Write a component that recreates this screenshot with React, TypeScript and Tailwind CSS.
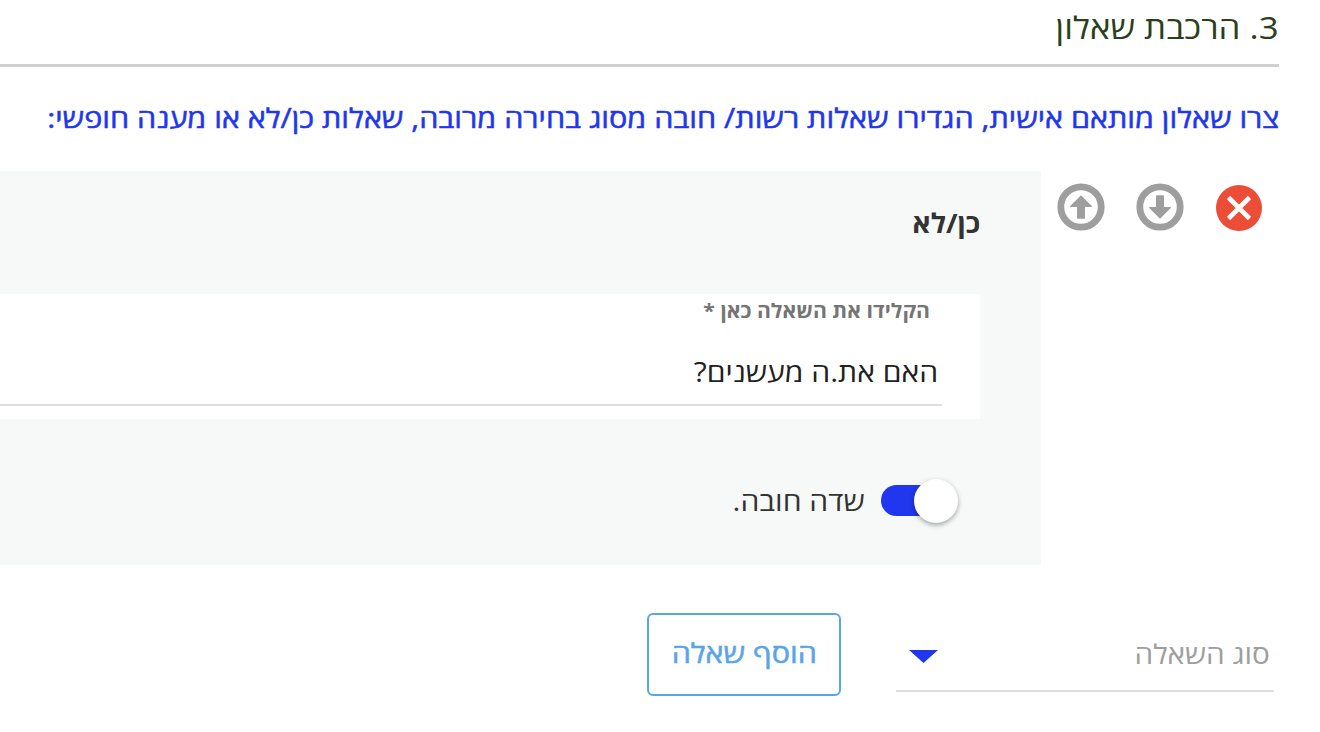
import React, { useState } from "react";

function ArrowIcon({ down = false }: { down?: boolean }) {
  return (
    <svg viewBox="0 0 48 48" className={`h-12 w-12 ${down ? "rotate-180" : ""}`}>
      <circle cx="24" cy="24" r="20.2" fill="none" stroke="#9e9e9e" strokeWidth="6.8" />
      <path
        d="M24 12.2 34.8 23Q35.4 24 34.4 24H28V34.8Q28 35.8 27 35.8H21Q20 35.8 20 34.8V24H13.6Q12.6 24 13.2 23Z"
        fill="#9e9e9e"
      />
    </svg>
  );
}

function RemoveIcon() {
  return (
    <svg viewBox="0 0 46 46" className="h-[46px] w-[46px]">
      <circle cx="23" cy="23" r="23" fill="#eb4d37" />
      <path d="M12.5 12.5 33.5 33.5M33.5 12.5 12.5 33.5" stroke="#fff" strokeWidth="4.6" />
    </svg>
  );
}

function QuestionActions() {
  return (
    <div className="flex w-[279px] shrink-0 items-start pr-[58px]">
      <button className="mt-[14px]">
        <RemoveIcon />
      </button>
      <button className="mt-3 mr-8">
        <ArrowIcon down />
      </button>
      <button className="mt-3 mr-[31px]">
        <ArrowIcon />
      </button>
    </div>
  );
}

function QuestionCard() {
  const [required, setRequired] = useState(true);
  return (
    <div className="h-[394px] flex-1 bg-[#f7f9f8] pr-[61px]">
      <h3 className="flex h-[123px] items-center pb-[19px] text-[27px] font-bold text-[#333]">
        <span className="inline-block origin-right scale-x-[1.037]">כן/לא</span>
      </h3>
      <div className="h-[125px] bg-white pr-[38px]">
        <div className="h-[112px] border-b-2 border-[#dedede]">
          <p className="pt-0.5 pr-3 text-[19.5px] leading-[30px] font-bold text-[#757575]">
            <span className="inline-block origin-right scale-x-[1.09]">הקלידו את השאלה כאן *</span>
          </p>
          <p className="mt-[26px] pr-1 text-[27px] leading-10 text-[#212121]">
            <span className="inline-block origin-right scale-x-[1.115]">האם את.ה מעשנים?</span>
          </p>
        </div>
      </div>
      <div className="mt-[60px] flex h-11 items-center pr-[22px]">
        <button
          onClick={() => setRequired(!required)}
          className="flex h-11 w-[77px] items-start"
        >
          <span className="z-10 h-11 w-11 shrink-0 rounded-full bg-white shadow-[0_2px_5px_rgba(0,0,0,0.35)]" />
          <span className="mt-1.5 -mr-7 h-[31px] w-[61px] shrink-0 rounded-full bg-[#2036ef]" />
        </button>
        <span className="mr-4 inline-block origin-right scale-x-[1.113] pb-px text-[27px] leading-10 text-[#333]">
          שדה חובה.
        </span>
      </div>
    </div>
  );
}

function AddQuestion() {
  return (
    <div className="flex items-start pt-12 pr-[46px]">
      <div className="flex h-[79px] w-[378px] items-center justify-between border-b-2 border-[#dedede] pt-1 pr-1 pl-[13px]">
        <span className="inline-block origin-right scale-x-[1.102] text-[27px] leading-10 text-[#9e9e9e]">
          סוג השאלה
        </span>
        <svg viewBox="0 0 29 13" className="mt-1.5 h-[13px] w-[29px]">
          <path d="M0 0H29L14.5 13Z" fill="#2036ef" />
        </svg>
      </div>
      <button className="mr-[55px] flex h-[83px] w-[194px] items-center justify-center rounded-md border-2 border-[#5aa4e8] pb-0.5 text-[27px] text-[#5aa4e8] [-webkit-text-stroke:0.5px]">
        <span className="inline-block scale-x-[1.13]">הוסף שאלה</span>
      </button>
    </div>
  );
}

function App() {
  return (
    <div
      dir="rtl"
      className="h-[732px] w-[1320px] overflow-hidden bg-white font-['Open_Sans','DejaVu_Sans',sans-serif] whitespace-nowrap"
    >
      <header className="mr-[41px] h-[67px] border-b-[3px] border-[#d1d1d1]">
        <h2 className="pt-1 text-[31px] leading-[46px] text-[#2a401c]">
          <span className="inline-block origin-right scale-x-[1.123]">3. הרכבת שאלון</span>
        </h2>
      </header>
      <p className="mr-[41px] flex h-[104px] items-center pb-px text-[27px] text-[#2036ef] [-webkit-text-stroke:0.5px]">
        <span className="inline-block origin-right scale-x-[1.13]">
          צרו שאלון מותאם אישית, הגדירו שאלות רשות/ חובה מסוג בחירה מרובה, שאלות כן/לא או מענה חופשי:
        </span>
      </p>
      <div className="flex">
        <QuestionActions />
        <QuestionCard />
      </div>
      <AddQuestion />
    </div>
  );
}

export default App;
